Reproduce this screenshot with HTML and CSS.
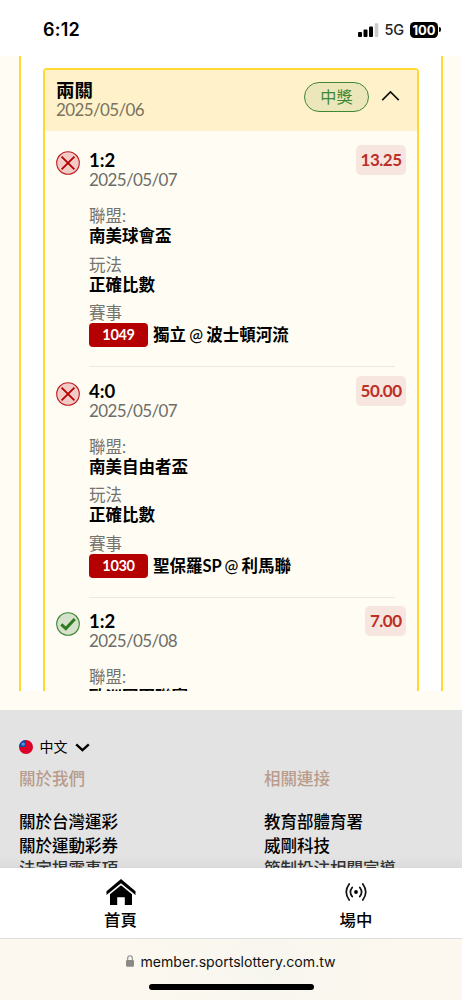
FILE: index.html
```html
<!DOCTYPE html>
<html lang="zh-Hant">
<head>
<meta charset="utf-8">
<title>台灣運彩</title>
<link rel="stylesheet" href="styles.css">
</head>
<body>
<div class="phone">
  <header class="status">
    <span class="time">6:12</span>
    <span class="signals">
      <svg class="bars" viewBox="0 0 21 14"><rect x="0" y="9" width="4" height="5" rx="1"/><rect x="5.5" y="6.5" width="4" height="7.5" rx="1"/><rect x="11" y="3.5" width="4" height="10.5" rx="1"/><rect x="16.7" y="0.3" width="3.6" height="13.7" rx="1" fill="#ccc"/></svg>
      <span class="net">5G</span>
      <span class="battery">100</span><i class="nub"></i>
    </span>
  </header>

  <main class="viewport">
    <section class="frame">
      <article class="card">
        <div class="card-head">
          <div><div class="combo">兩關</div><div class="date">2025/05/06</div></div>
          <span class="won">中獎</span>
          <svg class="chev" viewBox="0 0 20 12"><path d="M1 11 L10 2 L19 11" fill="none" stroke="#111" stroke-width="1.8"/></svg>
        </div>

        <div class="leg">
          <svg class="mark" viewBox="0 0 24 24"><circle cx="12" cy="12" r="11.3" fill="#f2cbc7" stroke="#bd1c20" stroke-width="1.1"/><path d="M5.6 5.6 L18.4 18.4 M18.4 5.6 L5.6 18.4" stroke="#b40000" stroke-width="1.8"/></svg>
          <div class="info">
            <div class="pick">1:2</div><div class="date">2025/05/07</div>
            <dl class="facts"><dt>聯盟:</dt><dd>南美球會盃</dd><dt>玩法</dt><dd>正確比數</dd><dt>賽事</dt><dd class="match"><span class="code">1049</span><span>獨立 <i class="at">@</i> 波士頓河流</span></dd></dl>
          </div>
          <span class="odds">13.25</span>
        </div>

        <div class="leg">
          <svg class="mark" viewBox="0 0 24 24"><circle cx="12" cy="12" r="11.3" fill="#f2cbc7" stroke="#bd1c20" stroke-width="1.1"/><path d="M5.6 5.6 L18.4 18.4 M18.4 5.6 L5.6 18.4" stroke="#b40000" stroke-width="1.8"/></svg>
          <div class="info">
            <div class="pick">4:0</div><div class="date">2025/05/07</div>
            <dl class="facts"><dt>聯盟:</dt><dd>南美自由者盃</dd><dt>玩法</dt><dd>正確比數</dd><dt>賽事</dt><dd class="match"><span class="code">1030</span><span>聖保羅SP <i class="at">@</i> 利馬聯</span></dd></dl>
          </div>
          <span class="odds">50.00</span>
        </div>

        <div class="leg">
          <svg class="mark" viewBox="0 0 24 24"><circle cx="12" cy="12" r="11.3" fill="#d5e1cb" stroke="#3c8433" stroke-width="1.1"/><path d="M5.3 12.4 L9.8 16.6 L18.8 7" fill="none" stroke="#2e7a20" stroke-width="3"/></svg>
          <div class="info">
            <div class="pick">1:2</div><div class="date">2025/05/08</div>
            <dl class="facts"><dt>聯盟:</dt><dd>歐洲冠軍聯賽</dd></dl>
          </div>
          <span class="odds">7.00</span>
        </div>
      </article>
    </section>
  </main>

  <footer class="footer">
    <div class="lang">
      <svg class="flag" viewBox="0 0 14 14"><circle cx="7" cy="7" r="7" fill="#dc0028"/><path d="M7 0 A7 7 0 0 0 0 7 H7Z" fill="#0b4ea8"/><circle cx="4.2" cy="4.1" r="1.7" fill="#5b96d6"/></svg>
      <span>中文</span>
      <svg class="down" viewBox="0 0 15 9"><path d="M1.2 1.3 L7.5 7.2 L13.8 1.3" fill="none" stroke="#000" stroke-width="2.3"/></svg>
    </div>
    <div class="cols">
      <div><h2>關於我們</h2><p>關於台灣運彩</p><p>關於運動彩券</p><p class="dim">法定揭露事項</p></div>
      <div><h2>相關連接</h2><p>教育部體育署</p><p>威剛科技</p><p class="dim">節制投注相關宣導</p></div>
    </div>
  </footer>

  <nav class="tabs">
    <a class="tab home"><svg viewBox="0 0 30 26"><path d="M15 0 L29.5 12.2 V16 L15 4.2 L0.5 16 V12.2Z"/><path d="M15 6.3 L26 15.2 V26 H18.8 V18.3 H11.2 V26 H4 V15.2Z"/></svg>首頁</a>
    <a class="tab live"><svg viewBox="0 0 22 18"><circle cx="11" cy="9" r="1.9"/><g fill="none" stroke="#111" stroke-width="1.7" stroke-linecap="round"><path d="M7.2 4.4 Q3.6 9 7.2 13.6 M14.8 4.4 Q18.4 9 14.8 13.6 M4.2 1 Q-1.7 9 4.2 17 M17.8 1 Q23.7 9 17.8 17"/></g></svg>場中</a>
  </nav>

  <div class="browser">
    <div class="url"><svg class="lock" viewBox="0 0 8 12"><rect x="0" y="5" width="8" height="6.8" rx="1.2" fill="#8a8986"/><path d="M1.7 5.5 V3.3 A2.3 2.5 0 0 1 6.3 3.3 V5.5" fill="none" stroke="#8a8986" stroke-width="1.1"/></svg><span>member.sportslottery.com.tw</span></div>
    <div class="indicator"></div>
  </div>
</div>
</body>
</html>
```
FILE: styles.css
```css
* { box-sizing: border-box; }
body { margin: 0; font-family: Lato, "Noto Sans CJK TC", sans-serif; color: #000; }
svg { display: block; flex: none; }
.phone { width: 462px; height: 1000px; overflow: hidden; display: flex; flex-direction: column; background: #fff; }

.status { height: 56px; flex: none; padding: 19px 21px 0 43px; display: flex; justify-content: space-between; align-items: flex-start; font-family: Inter, sans-serif; }
.time { font-size: 18px; line-height: 22px; font-weight: 600; letter-spacing: 0.2px; }
.signals { display: flex; align-items: center; height: 21px; }
.bars { width: 21px; height: 14px; }
.net { font-size: 14.5px; margin-left: 6px; width: 20px; font-weight: 500; letter-spacing: -0.2px; color: #222; }
.battery { margin-left: 5.5px; width: 28px; height: 16px; border-radius: 4.5px; background: #000; color: #fff; font-size: 13px; line-height: 16px; font-weight: 700; text-align: center; }
.nub { width: 2px; height: 5px; margin-left: 1px; border-radius: 0 2px 2px 0; background: #000; }

.viewport { height: 654px; flex: none; padding: 0 19px 19px; background: #fffdf3; }
.frame { height: 635px; overflow: hidden; background: #fff; border: solid #ffd92f; border-width: 0 2px; padding: 12.4px 22px 0; }
.card { height: 900px; border: 2px solid #ffd92f; border-radius: 4px; background: #fffdf3; }
.card-head { height: 61px; display: flex; padding: 10px 17px 0 11px; background: #fff2cb; }
.combo { font-size: 18.5px; line-height: 21px; font-weight: 700; }
.date { font-size: 17px; line-height: 19px; letter-spacing: -0.62px; color: #6d6d69; }
.card-head .date { color: #79735f; line-height: 18px; }
.won { margin: 2px 12px 0 auto; width: 65px; height: 30px; border: 1px solid #3e8735; border-radius: 15px; background: #ebe7ba; color: #3e8735; font-size: 16.2px; line-height: 28px; text-align: center; }
.chev { width: 19px; height: 11px; margin-top: 10px; }

.leg { height: 230.6px; display: flex; padding: 13.7px 11px 0 10.5px; }
.mark { width: 24px; height: 24px; margin-top: 6px; }
.info { width: 306px; height: 222px; flex: none; margin: 5px -60px 0 9.5px; }
.leg:not(:last-child) .info { height: 217px; border-bottom: 1.5px solid #ebe8e3; }
.pick { font-size: 18.5px; line-height: 20px; font-weight: 700; }
.facts { margin: 17px 0 0; font-size: 16.5px; }
.facts dt { line-height: 20px; color: #737370; }
.facts dd { margin: 0 0 7.6px; line-height: 21px; font-weight: 700; white-space: nowrap; }
.facts .match { display: flex; height: 24px; margin: 0; line-height: 25px; word-spacing: -0.8px; }
.at { font-style: normal; font-weight: 500; }
.code { width: 59px; height: 24px; margin-right: 5px; border-radius: 4px; background: #b40000; color: #fff; font-size: 14.5px; line-height: 24px; letter-spacing: -0.3px; text-align: center; }
.odds { position: relative; z-index: 1; height: 30px; margin-left: auto; padding: 0 4.5px 0 5px; border-radius: 5px; background: #f7e6df; color: #bc3029; font-size: 17px; line-height: 30px; font-weight: 700; letter-spacing: -0.5px; }

.footer { height: 158px; flex: none; overflow: hidden; padding: 27px 19px 0; background: linear-gradient(#e3e3e3 146px, #dbdbdb); font-family: "Noto Sans CJK TC", sans-serif; }
.lang { display: flex; align-items: center; height: 20px; font-size: 14px; }
.lang span { line-height: 18px; margin-bottom: 2px; }
.flag { width: 14px; height: 14px; margin-right: 6.5px; }
.down { width: 15px; height: 9px; margin: 1px 0 0 7.5px; }
.cols { display: grid; grid-template-columns: 245px 1fr; }
.cols h2 { margin: 9px 0 19px; font-size: 16.5px; line-height: 25px; font-weight: 500; color: #b99c8b; }
.cols p { margin: 0; font-size: 16.5px; line-height: 23.7px; font-weight: 500; white-space: nowrap; }
.cols .dim { color: #333; }

.tabs { height: 71px; flex: none; display: flex; border-bottom: 1px solid #dedede; background: #fff; font-family: "Noto Sans CJK TC", sans-serif; }
.tab { flex: 1; display: flex; flex-direction: column; align-items: center; font-size: 16.4px; line-height: 24px; font-weight: 500; }
.home { flex: 0 0 241px; padding-top: 11px; }
.home svg { width: 30px; height: 26px; margin-bottom: 2px; }
.live { padding: 15px 0 0 9px; }
.live svg { width: 22px; height: 18px; margin-bottom: 6px; }

.browser { flex: 1; display: flex; flex-direction: column; align-items: center; padding-top: 11px; background: radial-gradient(circle at 265px 30px, #f7f6ee 0, #fcf8f0 130px); font-family: Inter, sans-serif; }
.url { display: flex; align-items: center; height: 22px; font-size: 14.1px; color: #111; }
.lock { width: 8px; height: 12px; margin-right: 6px; }
.indicator { width: 165px; height: 6px; margin-top: 12px; border-radius: 3px; background: #000; }
```
